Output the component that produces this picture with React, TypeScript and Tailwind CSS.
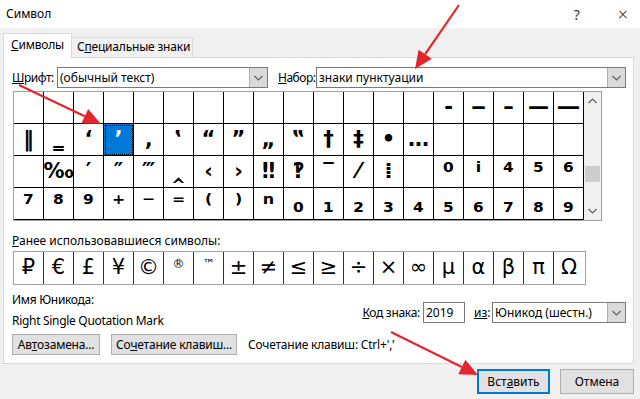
const ui = { fontFamily: '"Noto Sans", "DejaVu Sans", sans-serif' }
const glyphFont = { fontFamily: '"DejaVu Sans", "Noto Sans", sans-serif' }

const table: string[][] = [
  ['', '', '', '', '', '', '', '', '', '', '', '', '', '', '‐', '‒', '–', '—', '―'],
  ['‖', '‗', '‘', '’', '‚', '‛', '“', '”', '„', '‟', '†', '‡', '•', '…', '', '', '', '', ''],
  ['', '‰', '′', '″', '‴', '‸', '‹', '›', '‼', '‽', '‾', '⁄', '⁞', '', '⁰', 'ⁱ', '⁴', '⁵', '⁶'],
  ['⁷', '⁸', '⁹', '⁺', '⁻', '⁼', '⁽', '⁾', 'ⁿ', '₀', '₁', '₂', '₃', '₄', '₅', '₆', '₇', '₈', '₉'],
]

// super- and subscripts come out small in DejaVu, the dialog draws them bigger
const scripts = '⁰ⁱ⁴⁵⁶⁷⁸⁹⁺⁻⁼⁽⁾ⁿ₀₁₂₃₄₅₆₇₈₉'

const recent = ['₽', '€', '£', '¥', '©', '®', '™', '±', '≠', '≤', '≥', '÷', '×', '∞', 'µ', 'α', 'β', 'π', 'Ω']

function Chevron({ up }: { up?: boolean }) {
  return (
    <svg width="9" height="6" viewBox="0 0 9 6">
      <polyline
        points={up ? '0.5,5 4.5,1 8.5,5' : '0.5,1 4.5,5 8.5,1'}
        fill="none"
        stroke="#606060"
        strokeWidth="1.2"
      />
    </svg>
  )
}

function Select({ value, width }: { value: string; width: string }) {
  return (
    <div className={`${width} h-[21px] flex border border-[#7a7a7a] bg-white`}>
      <div className="flex-1 pl-[2px] text-[12px] leading-[19px] text-black whitespace-nowrap">{value}</div>
      <div className="w-[18px] h-full flex items-center justify-center bg-[#dadada] border-l border-[#adadad]">
        <Chevron />
      </div>
    </div>
  )
}

function Arrow({ x1, y1, x2, y2 }: { x1: number; y1: number; x2: number; y2: number }) {
  const dx = x2 - x1
  const dy = y2 - y1
  const len = Math.hypot(dx, dy)
  const ux = dx / len
  const uy = dy / len
  const bx = x2 - ux * 18
  const by = y2 - uy * 18
  const px = -uy * 8
  const py = ux * 8
  return (
    <g>
      <line x1={x1} y1={y1} x2={bx} y2={by} stroke="#e3262c" strokeWidth="2.2" />
      <polygon points={`${x2},${y2} ${bx + px},${by + py} ${bx - px},${by - py}`} fill="#e3262c" />
    </g>
  )
}

export default function App() {
  return (
    <div className="relative w-[640px] h-[399px] overflow-hidden bg-[#f0f0f0] text-black" style={ui}>
      {/* title bar */}
      <div className="h-[28px] bg-white flex items-center pl-[6px] text-[12px]">
        <span>Символ</span>
        <span className="ml-auto mr-[38px] text-[14px] text-[#333]">?</span>
        <span className="mr-[12px] text-[18px] font-light leading-none text-[#333]">×</span>
      </div>

      {/* tabs */}
      <div className="h-[29px] flex items-end pl-[3px] relative z-10 text-[12px] whitespace-nowrap tracking-[-0.2px]">
        <div className="h-[25px] -mb-px w-[69px] bg-white border border-b-0 border-[#d9d9d9] pl-[7px] leading-[22px]">
          <span className="underline">С</span>имволы
        </div>
        <div className="h-[20px] w-[121px] bg-[#f0f0f0] border border-l-0 border-b-0 border-[#d9d9d9] pl-[5px] leading-[18px]">
          С<span className="underline">п</span>ециальные знаки
        </div>
      </div>

      {/* tab panel */}
      <div className="ml-[3px] w-[631px] h-[307px] bg-white border border-[#d9d9d9] text-[12px]">
        <div className="mt-[9px] flex items-center pl-[8px] whitespace-nowrap">
          <span className="w-[45px] tracking-[-0.5px]">
            <span className="underline">Ш</span>рифт:
          </span>
          <Select value="(обычный текст)" width="w-[211px]" />
          <span className="ml-[10px] w-[38px] tracking-[-0.5px]">
            <span className="underline">Н</span>абор:
          </span>
          <Select value="знаки пунктуации" width="w-[310px]" />
        </div>

        {/* symbol grid */}
        <div className="mt-[3px] ml-[9px] w-[589px] flex border border-[#a0a0a0]">
          <div className="flex flex-col">
            {table.map((row, r) => (
              <div key={r} className="flex">
                {row.map((ch, c) => {
                  const sel = r === 1 && c === 3
                  const big = ch !== '' && scripts.includes(ch)
                  return (
                    <div
                      key={c}
                      className={`w-[30px] h-[32px] border-r border-b border-black flex items-center justify-center leading-none font-bold overflow-hidden ${
                        big ? 'text-[25px]' : 'text-[21px]'
                      } ${sel ? 'bg-[#0078d7] text-white outline-1 outline-dotted outline-black -outline-offset-2' : ''}`}
                      style={glyphFont}
                    >
                      {ch}
                    </div>
                  )
                })}
              </div>
            ))}
          </div>
          <div className="flex-1 bg-[#f0f0f0] flex flex-col items-center justify-between py-[6px]">
            <Chevron up />
            <div className="w-[15px] h-[16px] mt-[62px] bg-[#cdcdcd]" />
            <div className="flex-1" />
            <Chevron />
          </div>
        </div>

        <div className="mt-[12px] ml-[8px] leading-[16px]">
          <span className="underline">Р</span>анее использовавшиеся символы:
        </div>
        <div className="mt-[2px] ml-[9px] w-[573px] flex border border-[#a0a0a0]">
          {recent.map((ch, i) => (
            <div
              key={i}
              className={`w-[30px] h-[32px] flex justify-center ${i < recent.length - 1 ? 'border-r border-[#333]' : ''} ${
                ch === '®' || ch === '™' ? 'items-start pt-[3px] text-[12px]' : 'items-center text-[21px]'
              }`}
              style={glyphFont}
            >
              {ch}
            </div>
          ))}
        </div>

        <div className="flex pl-[8px] pr-[7px]">
          <div className="flex flex-col tracking-[-0.3px]">
            <div className="mt-[7px] leading-[16px]">Имя Юникода:</div>
            <div className="mt-[5px] leading-[16px]">Right Single Quotation Mark</div>
          </div>
          <div className="ml-auto mt-[17px] flex items-start whitespace-nowrap">
            <span className="leading-[21px] tracking-[-0.3px]">
              <span className="underline">К</span>од знака:
            </span>
            <div className="ml-[3px] w-[42px] h-[21px] border border-[#7a7a7a] pl-[2px] leading-[19px]">2019</div>
            <span className="ml-[9px] w-[18px] leading-[21px]">
              <span className="underline">из</span>:
            </span>
            <Select value="Юникод (шестн.)" width="w-[134px]" />
          </div>
        </div>

        <div className="mt-[5px] pl-[8px] flex items-center whitespace-nowrap tracking-[-0.2px]">
          <div className="w-[88px] h-[21px] bg-[#e1e1e1] border border-[#adadad] flex items-center justify-center">
            Ав<span className="underline">т</span>озамена...
          </div>
          <div className="ml-[11px] w-[126px] h-[21px] bg-[#e1e1e1] border border-[#adadad] flex items-center justify-center">
            Со<span className="underline">ч</span>етание клавиш...
          </div>
          <span className="ml-[11px]">Сочетание клавиш: Ctrl+',’</span>
        </div>
      </div>

      {/* footer buttons */}
      <div className="mt-[5px] flex justify-end pr-[6px] text-[12px]">
        <div className="w-[73px] h-[25px] bg-[#e1e1e1] border-2 border-[#0078d7] flex items-center justify-center">
          Вст<span className="underline">а</span>вить
        </div>
        <div className="ml-[10px] w-[74px] h-[25px] bg-[#e1e1e1] border border-[#adadad] flex items-center justify-center">
          Отмена
        </div>
      </div>

      {/* annotation arrows */}
      <svg className="absolute inset-0 pointer-events-none" width="640" height="399">
        <Arrow x1={19} y1={85} x2={101} y2={124} />
        <Arrow x1={459} y1={5} x2={415} y2={69} />
        <Arrow x1={391} y1={332} x2={478} y2={375} />
      </svg>
    </div>
  )
}
